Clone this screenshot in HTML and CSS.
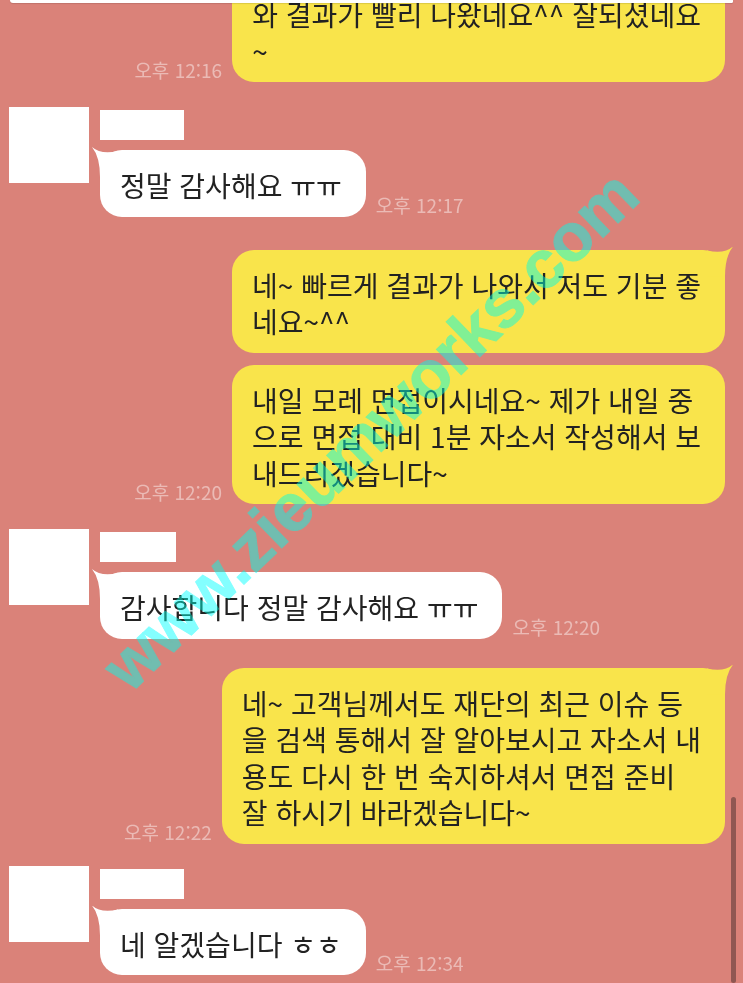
FILE: index.html
```html
<!DOCTYPE html>
<html lang="ko">
<head>
  <meta charset="UTF-8" />
  <meta name="viewport" content="width=device-width, initial-scale=1" />
  <title>대화</title>
  <link rel="stylesheet" href="styles.css">
</head>
<body>
  <div class="chat">
    <div class="top-edge"></div>

    <div class="row out cut">
      <span class="time">오후 12:16</span>
      <div class="bubble me">와 결과가 빨리 나왔네요^^ 잘되셨네요<br>~</div>
    </div>

    <div class="group">
      <div class="avatar"></div>
      <div class="group-body">
        <div class="name"></div>
        <div class="row in">
          <div class="bubble you tail">정말 감사해요 ㅠㅠ</div>
          <span class="time">오후 12:17</span>
        </div>
      </div>
    </div>

    <div class="row out first">
      <div class="bubble me tail">네~ 빠르게 결과가 나와서 저도 기분 좋<br>네요~^^</div>
    </div>
    <div class="row out next">
      <span class="time">오후 12:20</span>
      <div class="bubble me">내일 모레 면접이시네요~ 제가 내일 중<br>으로 면접 대비 1분 자소서 작성해서 보<br>내드리겠습니다~</div>
    </div>

    <div class="group">
      <div class="avatar"></div>
      <div class="group-body">
        <div class="name short"></div>
        <div class="row in">
          <div class="bubble you tail">감사합니다 정말 감사해요 ㅠㅠ</div>
          <span class="time">오후 12:20</span>
        </div>
      </div>
    </div>

    <div class="row out first close">
      <span class="time">오후 12:22</span>
      <div class="bubble me tail">네~ 고객님께서도 재단의 최근 이슈 등<br>을 검색 통해서 잘 알아보시고 자소서 내<br>용도 다시 한 번 숙지하셔서 면접 준비<br>잘 하시기 바라겠습니다~</div>
    </div>

    <div class="group last">
      <div class="avatar"></div>
      <div class="group-body">
        <div class="name"></div>
        <div class="row in">
          <div class="bubble you tail">네 알겠습니다 ㅎㅎ</div>
          <span class="time">오후 12:34</span>
        </div>
      </div>
    </div>

    <div class="watermark">www.zieumworks.com</div>
    <div class="scrollbar"></div>
  </div>
</body>
</html>
```

FILE: styles.css
```css
* {
  box-sizing: border-box;
}

body {
  margin: 0;
  background: #da8279;
  font-family: "Noto Sans CJK KR", "Noto Sans", sans-serif;
  color: #222;
}

.chat {
  position: relative;
  height: 983px;
  overflow: hidden;
  background: #da8279;
  isolation: isolate;
  padding: 0 18px 0 9px;
}

.top-edge {
  position: absolute;
  top: 0;
  left: 10px;
  right: 10px;
  height: 3px;
  background: #fff;
  border-radius: 0 0 2px 4px;
  box-shadow: 0 1px 1px rgba(0, 0, 0, 0.12);
  z-index: 2;
}

.row {
  display: flex;
  align-items: flex-end;
  gap: 10px;
}

.row.out {
  justify-content: flex-end;
}

.row.cut {
  margin-top: -21px;
}

.row.first {
  margin-top: 33px;
}

.row.first.close {
  margin-top: 29px;
}

.row.next {
  margin-top: 12px;
}

.group {
  display: flex;
  gap: 11px;
  margin-top: 25px;
}

.group.last {
  margin-top: 22px;
}

.avatar {
  width: 80px;
  height: 76px;
  background: #fff;
  flex-shrink: 0;
}

.group-body {
  padding-top: 3px;
}

.name {
  width: 84px;
  height: 30px;
  background: #fff;
  margin-bottom: 10px;
}

.name.short {
  width: 76px;
}

.bubble {
  position: relative;
  font-size: 28px;
  line-height: 36.5px;
  padding: 17px 24px 13px 20px;
  border-radius: 22px;
  white-space: nowrap;
}

.bubble.me {
  background: #f9e44b;
}

.bubble.you {
  background: #fff;
}

.bubble.tail::before {
  content: "";
  position: absolute;
  top: -3px;
  width: 26px;
  height: 30px;
  background: inherit;
  clip-path: path("M0 0 Q9 8 26 4 L26 30 L8 30 Q8 10 0 0 Z");
}

.bubble.you.tail::before {
  left: -8px;
}

.bubble.me.tail::before {
  right: -8px;
  transform: scaleX(-1);
}

.time {
  font-size: 19px;
  line-height: 22px;
  color: rgba(255, 255, 255, 0.45);
  white-space: nowrap;
  margin-bottom: 1px;
}

.watermark {
  position: absolute;
  left: 370px;
  top: 430px;
  transform: translate(-50%, -50%) rotate(-44deg);
  font-family: "Liberation Sans", Arial, sans-serif;
  font-weight: 700;
  font-size: 67px;
  color: #42bcb4;
  -webkit-text-stroke: 1px #42bcb4;
  mix-blend-mode: hard-light;
  white-space: nowrap;
  pointer-events: none;
}

.scrollbar {
  position: absolute;
  right: 7px;
  top: 797px;
  bottom: 0;
  width: 5px;
  border-radius: 3px;
  background: #8f5752;
}
```
